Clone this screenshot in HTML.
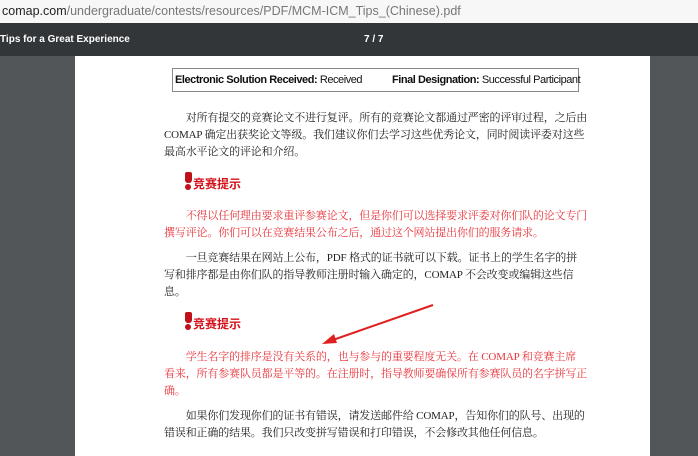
<!DOCTYPE html>
<html><head><meta charset="utf-8"><style>
body{margin:0;width:698px;height:455px;overflow:hidden;background:#525659;font-family:"Liberation Serif","Noto Serif CJK SC",serif;position:relative}
.url{position:absolute;left:0;top:0;width:698px;height:23px;background:#f7f7f7;font:12.5px "Liberation Sans",sans-serif;color:#777;line-height:22px;padding-left:2px;box-sizing:border-box}
.url b{font-weight:normal;color:#222}
.bar{position:absolute;left:0;top:23px;width:698px;height:33px;background:#323639;color:#fff;font:bold 10px "Liberation Sans",sans-serif;line-height:33px}
.page{position:absolute;left:75px;top:56px;width:575px;height:400px;background:#fff}
.box{position:absolute;left:172px;top:68px;width:407px;height:24px;border:1px solid #888;box-sizing:border-box;font:11px "Liberation Sans",sans-serif;letter-spacing:-0.45px;line-height:30px;color:#111;white-space:nowrap}
p{position:absolute;margin:0;left:164px;font-size:11px;letter-spacing:-0.15px;line-height:17px;color:#222;white-space:nowrap}
.r{color:#e8333a}
.tip{position:absolute;left:184px;color:#d4101a;font:bold 12px "Noto Sans CJK SC",sans-serif}
.tip i{display:inline-block;width:8px;height:18px;vertical-align:-2px;margin-right:1px;position:relative}
.tip i:before{content:"";position:absolute;left:1px;top:0;width:7px;height:11px;background:#c0101a;border-radius:2px 2px 3px 3px}
.tip i:after{content:"";position:absolute;left:1px;top:12px;width:6px;height:6px;background:#c0101a;border-radius:50%}
</style></head><body>
<div class="url"><b>comap.com</b>/undergraduate/contests/resources/PDF/MCM-ICM_Tips_(Chinese).pdf</div>
<div class="bar"><span style="position:absolute;left:0">Tips for a Great Experience</span><span style="position:absolute;left:364px">7 / 7</span></div>
<div class="page"></div>
<div class="box"><span style="position:absolute;left:2px;top:-4px"><b>Electronic Solution Received:</b> Received</span><span style="position:absolute;left:219px;top:-4px"><b>Final Designation:</b> Successful Participant</span></div>
<p style="top:110px">　　对所有提交的竞赛论文不进行复评。所有的竞赛论文都通过严密的评审过程，之后由<br>COMAP 确定出获奖论文等级。我们建议你们去学习这些优秀论文，同时阅读评委对这些<br>最高水平论文的评论和介绍。</p>
<div class="tip" style="top:172px"><i></i>竞赛提示</div>
<p class="r" style="top:208px">　　不得以任何理由要求重评参赛论文，但是你们可以选择要求评委对你们队的论文专门<br>撰写评论。你们可以在竞赛结果公布之后，通过这个网站提出你们的服务请求。</p>
<p style="top:250px">　　一旦竞赛结果在网站上公布，PDF 格式的证书就可以下载。证书上的学生名字的拼<br>写和排序都是由你们队的指导教师注册时输入确定的，COMAP 不会改变或编辑这些信<br>息。</p>
<div class="tip" style="top:312px"><i></i>竞赛提示</div>
<p class="r" style="top:349px">　　学生名字的排序是没有关系的，也与参与的重要程度无关。在 COMAP 和竞赛主席<br>看来，所有参赛队员都是平等的。在注册时，指导教师要确保所有参赛队员的名字拼写正<br>确。</p>
<p style="top:408px">　　如果你们发现你们的证书有错误，请发送邮件给 COMAP，告知你们的队号、出现的<br>错误和正确的结果。我们只改变拼写错误和打印错误，不会修改其他任何信息。</p>
<svg style="position:absolute;left:0;top:0" width="698" height="455"><line x1="433" y1="305" x2="330" y2="341" stroke="#e02020" stroke-width="2"/><polygon points="322,344 334,334 337,343" fill="#e02020"/></svg>
</body></html>
